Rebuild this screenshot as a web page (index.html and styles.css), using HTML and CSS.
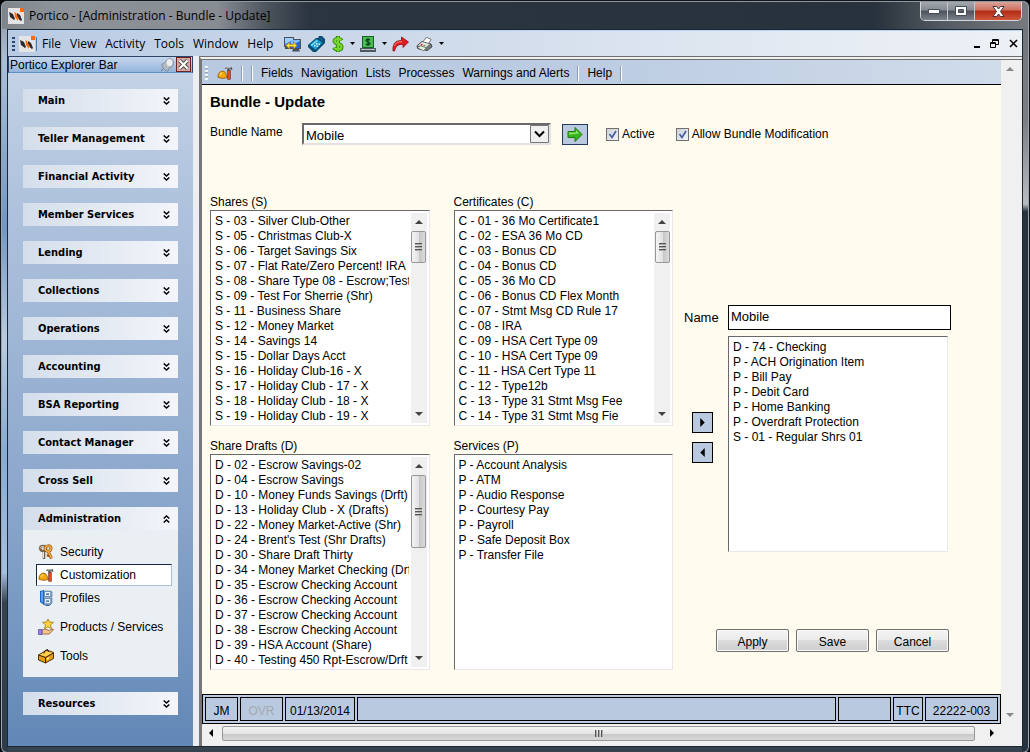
FILE: index.html
```html
<!doctype html>
<html lang="en">
<head>
    <meta charset="UTF-8">
    <meta name="viewport" content="width=device-width, initial-scale=1.0">
    <title>Portico - [Administration - Bundle - Update]</title>
    <link rel="stylesheet" href="styles.css">
</head>
<body>
    <!-- shared symbols -->
    <svg class="defs" aria-hidden="true">
        <symbol id="logo" viewBox="0 0 16 16">
            <path fill="#e4e4e6" d="M0 0h16v16H0z"/>
            <path fill="#ff6a10" d="M12 0h4v4h-4z"/>
            <path fill="#2b2b2d" d="M1 4l4 2 2 5-1 1-4-3zM9 5l3 2 2 5-1 1-4-3z"/>
            <path fill="#ff6a10" d="M6 4l2 1 3 6-1 2-3-4z"/>
            <path fill="#fff" d="M5 4l1 0 1 5zM10 13l1 0 0-3z"/>
        </symbol>
        <symbol id="down" viewBox="0 0 7 8">
            <path fill="none" stroke="#000" stroke-width="1.5" d="M.7.5L3.5 3 6.3.5M.7 4.5L3.5 7l2.8-2.5"/>
        </symbol>
        <symbol id="up" viewBox="0 0 7 8">
            <path fill="none" stroke="#000" stroke-width="1.5" d="M.7 3.5L3.5 1l2.8 2.5M.7 7.5L3.5 5l2.8 2.5"/>
        </symbol>
        <symbol id="hammer" viewBox="0 0 17 16">
            <path fill="#f7a80d" stroke="#8a4a00" stroke-width=".8" d="M1 12.500C1 8 3.500 6 6 6c2 0 3.500 2 4 4.500l1 2c-3 1.500-6 1.500-10 0z"/>
            <path fill="#ffe27a" d="M3 9.500C3.500 8 5 7 6 7.200L4 10.500z"/>
            <path fill="#6e1500" d="M11 5h3.500v10H11z"/>
            <path fill="#f0501e" d="M11.800 6h2v8.500h-2z"/>
            <path fill="#555" d="M8 3.500L10 1.500h5.500l1 3h-1.800l-.8-1-1 2h-2v-2z"/>
            <path fill="#ddd" d="M10.500 2h4v1h-5z"/>
        </symbol>
        <symbol id="drop" viewBox="0 0 5 3"><path d="M0 0h5L2.500 3z"/></symbol>
        <symbol id="tri-up" viewBox="0 0 8 4"><path fill="#444" d="M0 4L4 0l4 4z"/></symbol>
        <symbol id="tri-down" viewBox="0 0 8 4"><path fill="#444" d="M0 0h8L4 4z"/></symbol>
        <symbol id="tri-left" viewBox="0 0 4 8"><path d="M4 0v8L0 4z"/></symbol>
        <symbol id="tri-right" viewBox="0 0 4 8"><path d="M0 0l4 4-4 4z"/></symbol>
    </svg>

    <div class="window">
        <header class="title-bar">
            <svg class="icon"><use href="#logo"/></svg>
            <span class="title">Portico - [Administration - Bundle - Update]</span>
            <div class="window-buttons">
                <button aria-label="Minimize"><svg width="12" height="5" viewBox="0 0 12 5"><path fill="#fff" stroke="#444c58" d="M.5.5h11v4H.5z"/></svg></button>
                <button aria-label="Maximize"><svg width="12" height="10" viewBox="0 0 12 10"><path fill="#fff" stroke="#444c58" fill-rule="evenodd" d="M.5.500h11v9H.5zM3.500 3.500h5v3h-5z"/></svg></button>
                <button class="close" aria-label="Close"><svg width="13" height="11" viewBox="0 0 13 11"><path fill="#fff" stroke="#4d3238" d="M1 .5h3.500l2 2.500 2-2.500H12L8.500 5.500l3.500 5H8.500l-2-2.500-2 2.500H1l3.500-5z"/></svg></button>
            </div>
        </header>

        <div class="client">
            <nav class="menu-bar">
                <span class="grip"></span>
                <svg class="icon"><use href="#logo"/></svg>
                <span class="line"></span>
                <button>File</button>
                <button>View</button>
                <button>Activity</button>
                <button>Tools</button>
                <button>Window</button>
                <button>Help</button>
                <div class="tools">
                    <button aria-label="Connect">
                        <svg width="17" height="16" viewBox="0 0 17 16">
                            <path fill="#46505f" d="M0 1h10v10H0zM6 3h11v10H6zM9 13h6l1 2.500H8zM1 11h4v2H1z"/>
                            <path fill="#3e7bea" d="M1 2h8v8H1z"/>
                            <path fill="#9bd0ff" d="M1 2h8v2L1 8z"/>
                            <path fill="#2862dc" d="M7 4h9v8H7z"/>
                            <path fill="#7dbafc" d="M7 4h9v1L7 10z"/>
                            <path fill="#ffe02c" stroke="#9a7000" stroke-width=".6" d="M2 9.500L5.500 6v2.300h4V6L13 9.500 9.500 13v-2.300h-4V13z"/>
                        </svg>
                    </button>
                    <button aria-label="Calculator">
                        <svg width="17" height="16" viewBox="0 0 17 16">
                            <path fill="#0a4c70" d="M0 9L8 2l2 0 1-2 3 0 3 3 0 4-9 9-3 0-5-5z"/>
                            <path fill="#1698cc" d="M1.500 9L8.500 3l6 3.500-7 7.500z"/>
                            <path fill="#6fd4f5" d="M2.500 9l6-5 1.500 1-6 5z"/>
                            <path fill="#0c5c86" d="M11 2l2-1 2.500 2.500-1.500 2z"/>
                            <path fill="#e8fbff" d="M6 9h1.500v1.500H6zM8 7h1.500v1.500H8zM8.500 9.500H10V11H8.500zM10.500 7.500H12V9h-1.500z"/>
                        </svg>
                    </button>
                    <button aria-label="Cash" class="with-drop">
                        <svg width="12" height="16" viewBox="0 0 12 16">
                            <path fill="none" stroke="#2c7a0a" stroke-width="4" d="M9.500 4.500C8.500 2.500 3 2 2.500 5c0 3 7 2.500 7 6 0 3.500-6 3-7.500.5M6 0v16"/>
                            <path fill="none" stroke="#78d82a" stroke-width="2.400" d="M9.500 4.500C8.500 2.500 3 2 2.500 5c0 3 7 2.500 7 6 0 3.500-6 3-7.500.5M6 .5v15"/>
                        </svg>
                        <svg class="drop"><use href="#drop"/></svg>
                    </button>
                    <button aria-label="Teller" class="with-drop">
                        <svg width="16" height="16" viewBox="0 0 16 16">
                            <path fill="#13632a" d="M2 0h12v12H2z"/>
                            <path fill="#49ba54" d="M3 1h10v10H3z"/>
                            <path fill="none" stroke="#073d14" stroke-width="1.200" d="M10 4C9 3 6 3 6 4.500S10 6 10 7.500 7 9 6 8M8 2v8"/>
                            <path fill="#50565e" d="M0 12h16v4H0z"/>
                            <path fill="#b9c0c8" d="M1 13h14v1H1z"/>
                        </svg>
                        <svg class="drop"><use href="#drop"/></svg>
                    </button>
                    <button aria-label="Forward">
                        <svg width="17" height="16" viewBox="0 0 17 16">
                            <path fill="#e21d20" stroke="#8c0c10" stroke-width=".8" d="M1 15C.500 8 3 4.500 9.500 4.500V1l7 5-5.500 5.500V8.500C6 8 4 10 2.500 15z"/>
                            <path fill="none" stroke="#ff8a80" d="M2 10c1.500-3 4-4.500 8-4.300"/>
                        </svg>
                    </button>
                    <button aria-label="Print" class="with-drop">
                        <svg width="17" height="16" viewBox="0 0 18 16">
                            <path fill="#fff" stroke="#555" stroke-width=".8" d="M7 6l4-5 5 2-3 5z"/>
                            <path fill="#74787c" stroke="#333" stroke-width=".8" d="M1 10l5-4.500 10 2.500 1 3-5 4-10-2z"/>
                            <path fill="#dfe1e2" d="M2 9.500L6.500 6l8 2-4 3.500z"/>
                            <path fill="#e8f3dc" stroke="#444" stroke-width=".6" d="M1 12l4-2 6 2-3 3z"/>
                            <path fill="#d61e1e" d="M5 8h2v1.500H5z"/>
                            <path fill="#38a820" d="M8 9h2v1H8z"/>
                        </svg>
                        <svg class="drop"><use href="#drop"/></svg>
                    </button>
                </div>
                <div class="child-buttons">
                    <button aria-label="Minimize child"><svg width="6" height="9" viewBox="0 0 6 9"><path d="M0 7h6v2H0z"/></svg></button>
                    <button aria-label="Restore child"><svg width="9" height="9" viewBox="0 0 9 9"><path fill="none" stroke="#000" d="M2.500 3V.5h6v5H6M3 1.500h5M.5 3.500h5v5h-5zM1 4.500h4"/></svg></button>
                    <button aria-label="Close child"><svg width="9" height="9" viewBox="0 0 9 9"><path fill="none" stroke="#000" stroke-width="1.600" d="M1 1l7 7M8 1L1 8"/></svg></button>
                </div>
            </nav>

            <div class="workspace">
                <aside class="sidebar">
                    <div class="sidebar-title">
                        <span>Portico Explorer Bar</span>
                        <svg width="14" height="14" viewBox="0 0 14 14">
                            <path stroke="#777" d="M1 13l4-4"/>
                            <path fill="#b4bac2" stroke="#747b84" stroke-width=".7" d="M2 6c2-1 3-1 4-3C8 0 12 0 13 3s0 6-3 7c-1 0-1 1-2 3-3 0-6-3-6-7z"/>
                            <ellipse cx="9.500" cy="4.500" rx="3" ry="3.500" fill="#eceef0"/>
                        </svg>
                        <button aria-label="Close explorer bar"><svg width="11" height="11" viewBox="0 0 11 11"><path stroke="#444" stroke-width="4" d="M1.500 1.500l8 8M9.500 1.500l-8 8"/><path stroke="#fff" stroke-width="2.200" d="M1.500 1.500l8 8M9.500 1.500l-8 8"/></svg></button>
                    </div>
                    <div class="groups">
                        <button class="group">Main <svg><use href="#down"/></svg></button>
                        <button class="group">Teller Management <svg><use href="#down"/></svg></button>
                        <button class="group">Financial Activity <svg><use href="#down"/></svg></button>
                        <button class="group">Member Services <svg><use href="#down"/></svg></button>
                        <button class="group">Lending <svg><use href="#down"/></svg></button>
                        <button class="group">Collections <svg><use href="#down"/></svg></button>
                        <button class="group">Operations <svg><use href="#down"/></svg></button>
                        <button class="group">Accounting <svg><use href="#down"/></svg></button>
                        <button class="group">BSA Reporting <svg><use href="#down"/></svg></button>
                        <button class="group">Contact Manager <svg><use href="#down"/></svg></button>
                        <button class="group">Cross Sell <svg><use href="#down"/></svg></button>
                        <div class="open-group">
                            <button class="group">Administration <svg><use href="#up"/></svg></button>
                            <div class="items">
                                <a href="#security">
                                    <svg class="icon" viewBox="0 0 16 16">
                                        <path fill="none" stroke="#76634e" stroke-width="2.500" d="M2 4.500C2 1 8 1 8 4.500S3 8 2 4.500zM6 7v8"/>
                                        <path fill="none" stroke="#e8dfd0" d="M2 4.500C2 2 7 1.500 7.500 4.500M5.500 8v6"/>
                                        <path fill="none" stroke="#a55e13" stroke-width="3" d="M7 5c0-4 6-4 6-1s-4 5-6 1zM10 7l3.500 7.500M11 11l-2 1"/>
                                        <path fill="none" stroke="#f6b34c" stroke-width="1.400" d="M7 5c0-4 6-4 6-1s-4 5-6 1zM10.500 8l3 6"/>
                                    </svg>
                                    Security
                                </a>
                                <a href="#customization" class="selected">
                                    <svg class="icon"><use href="#hammer"/></svg>
                                    Customization
                                </a>
                                <a href="#profiles">
                                    <svg class="icon" viewBox="0 0 16 16">
                                        <path fill="#1a66c4" d="M2 1l4-1v15l-4-3zM6 13h8l-3 3H8z"/>
                                        <path fill="#58a4f2" d="M3 2l2-1v12l-2-2z"/>
                                        <path fill="#87a6c8" stroke="#4a6b94" stroke-width=".6" d="M6 1h7l1 1v5H6zM6 8h8v5l-2 2H6z"/>
                                        <path fill="#e5eff8" d="M7 2h5v4H7zM7 9h5v4H7z"/>
                                        <path fill="#2c5c98" d="M8 3.500h3v1.200H8zM8 10.500h3v1.200H8z"/>
                                    </svg>
                                    Profiles
                                </a>
                                <a href="#products" class="spaced">
                                    <svg class="icon" viewBox="0 0 16 16">
                                        <path fill="#f8d33c" stroke="#a87a0c" stroke-width=".8" d="M10 0l1.500 3 4 .3-3 2.500 1 4-3.500-2-3.500 2 1-4-3-2.500 4-.3z"/>
                                        <path fill="#f4c68c" stroke="#8e5a28" stroke-width=".8" d="M4 11l3-1 4 1.500 4-1.500.5 1L11 15H4z"/>
                                        <path fill="#9484e4" stroke="#5a4ab0" stroke-width=".8" d="M.5 10.500H4v5H.5z"/>
                                    </svg>
                                    Products / Services
                                </a>
                                <a href="#tools" class="spaced">
                                    <svg class="icon" viewBox="0 0 16 16">
                                        <path fill="#e89a10" stroke="#3c2400" stroke-width=".9" d="M.5 7L9 2l6.500 2.500v6L7.500 15 .5 12z"/>
                                        <path fill="#ffd04a" d="M1.500 7L9 3l5.500 2L7.500 8.500z"/>
                                        <path fill="none" stroke="#3c2400" d="M.5 7l7 2.500 8-4.500M7.500 9.500V15M6 5.500L6.500 3l3-1.500 1 2.500"/>
                                        <path fill="#fff3b0" d="M9 10l2-1v2l-2 1z"/>
                                    </svg>
                                    Tools
                                </a>
                            </div>
                        </div>
                        <button class="group">Resources <svg><use href="#down"/></svg></button>
                    </div>
                </aside>

                <div class="mdi">
                    <div class="page">
                        <nav class="page-menu">
                            <span class="grip light"></span>
                            <button aria-label="Customize"><svg class="icon"><use href="#hammer"/></svg></button>
                            <span class="sep"></span>
                            <span class="sep"></span>
                            <button>Fields</button>
                            <button>Navigation</button>
                            <button>Lists</button>
                            <button>Processes</button>
                            <button>Warnings and Alerts</button>
                            <span class="sep"></span>
                            <button>Help</button>
                            <span class="sep"></span>
                        </nav>

                        <main>
                            <h1>Bundle - Update</h1>
                            <div class="bundle-row">
                                <label class="bundle-label" for="bundle">Bundle Name</label>
                                <select id="bundle" class="combo"><option>Mobile</option></select>
                                <button class="go" aria-label="Go">
                                    <svg width="16" height="15" viewBox="0 0 16 15">
                                        <path fill="#35b71c" stroke="#24760f" d="M1 4.500h7v-4L15 7.500l-7 7v-4H1z"/>
                                        <path fill="#92e66c" d="M2 5.500h7V3l3 3.500-10 1z"/>
                                    </svg>
                                </button>
                                <label class="check active"><input type="checkbox" checked> Active</label>
                                <label class="check"><input type="checkbox" checked> Allow Bundle Modification</label>
                            </div>

                            <div class="editor">
                                <div class="lists">
                                    <div class="field">
                                        <label for="shares">Shares (S)</label>
                                        <div class="listbox">
                                            <select id="shares" multiple>
                                                <option>S - 03 - Silver Club-Other</option>
                                                <option>S - 05 - Christmas Club-X</option>
                                                <option>S - 06 - Target Savings Six</option>
                                                <option>S - 07 - Flat Rate/Zero Percent! IRA</option>
                                                <option>S - 08 - Share Type 08 - Escrow;Test</option>
                                                <option>S - 09 - Test For Sherrie (Shr)</option>
                                                <option>S - 11 - Business Share</option>
                                                <option>S - 12 - Money Market</option>
                                                <option>S - 14 - Savings 14</option>
                                                <option>S - 15 - Dollar Days Acct</option>
                                                <option>S - 16 - Holiday Club-16 - X</option>
                                                <option>S - 17 - Holiday Club - 17 - X</option>
                                                <option>S - 18 - Holiday Club - 18 - X</option>
                                                <option>S - 19 - Holiday Club - 19 - X</option>
                                            </select>
                                            <div class="scroll">
                                                <svg class="tri"><use href="#tri-up"/></svg>
                                                <span class="thumb"><i></i></span>
                                                <svg class="tri"><use href="#tri-down"/></svg>
                                            </div>
                                        </div>
                                    </div>
                                    <div class="field">
                                        <label for="certs">Certificates (C)</label>
                                        <div class="listbox">
                                            <select id="certs" multiple>
                                                <option>C - 01 - 36 Mo Certificate1</option>
                                                <option>C - 02 - ESA 36 Mo CD</option>
                                                <option>C - 03 - Bonus CD</option>
                                                <option>C - 04 - Bonus CD</option>
                                                <option>C - 05 - 36 Mo CD</option>
                                                <option>C - 06 - Bonus CD Flex Month</option>
                                                <option>C - 07 - Stmt Msg CD Rule 17</option>
                                                <option>C - 08 - IRA</option>
                                                <option>C - 09 - HSA Cert Type 09</option>
                                                <option>C - 10 - HSA Cert Type 09</option>
                                                <option>C - 11 - HSA Cert Type 11</option>
                                                <option>C - 12 - Type12b</option>
                                                <option>C - 13 - Type 31 Stmt Msg Fee</option>
                                                <option>C - 14 - Type 31 Stmt Msg Fie</option>
                                            </select>
                                            <div class="scroll">
                                                <svg class="tri"><use href="#tri-up"/></svg>
                                                <span class="thumb"><i></i></span>
                                                <svg class="tri"><use href="#tri-down"/></svg>
                                            </div>
                                        </div>
                                    </div>
                                    <div class="field">
                                        <label for="drafts">Share Drafts (D)</label>
                                        <div class="listbox">
                                            <select id="drafts" multiple>
                                                <option>D - 02 - Escrow Savings-02</option>
                                                <option>D - 04 - Escrow Savings</option>
                                                <option>D - 10 - Money Funds Savings (Drft)</option>
                                                <option>D - 13 - Holiday Club - X (Drafts)</option>
                                                <option>D - 22 - Money Market-Active (Shr)</option>
                                                <option>D - 24 - Brent's Test (Shr Drafts)</option>
                                                <option>D - 30 - Share Draft Thirty</option>
                                                <option>D - 34 - Money Market Checking (Drft)</option>
                                                <option>D - 35 - Escrow Checking Account</option>
                                                <option>D - 36 - Escrow Checking Account</option>
                                                <option>D - 37 - Escrow Checking Account</option>
                                                <option>D - 38 - Escrow Checking Account</option>
                                                <option>D - 39 - HSA Account (Share)</option>
                                                <option>D - 40 - Testing 450 Rpt-Escrow/Drft</option>
                                            </select>
                                            <div class="scroll">
                                                <svg class="tri"><use href="#tri-up"/></svg>
                                                <span class="thumb long"><i></i></span>
                                                <svg class="tri"><use href="#tri-down"/></svg>
                                            </div>
                                        </div>
                                    </div>
                                    <div class="field">
                                        <label for="services">Services (P)</label>
                                        <div class="listbox">
                                            <select id="services" multiple>
                                                <option>P - Account Analysis</option>
                                                <option>P - ATM</option>
                                                <option>P - Audio Response</option>
                                                <option>P - Courtesy Pay</option>
                                                <option>P - Payroll</option>
                                                <option>P - Safe Deposit Box</option>
                                                <option>P - Transfer File</option>
                                            </select>
                                        </div>
                                    </div>
                                </div>

                                <div class="chosen">
                                    <div class="name-row">
                                        <label for="name">Name</label>
                                        <input id="name" type="text" value="Mobile">
                                    </div>
                                    <div class="chosen-row">
                                        <div class="movers">
                                            <button aria-label="Add"><svg><use href="#tri-right"/></svg></button>
                                            <button aria-label="Remove"><svg><use href="#tri-left"/></svg></button>
                                        </div>
                                        <div class="listbox">
                                            <select multiple aria-label="Bundle items">
                                                <option>D - 74 - Checking</option>
                                                <option>P - ACH Origination Item</option>
                                                <option>P - Bill Pay</option>
                                                <option>P - Debit Card</option>
                                                <option>P - Home Banking</option>
                                                <option>P - Overdraft Protection</option>
                                                <option>S - 01 - Regular Shrs 01</option>
                                            </select>
                                        </div>
                                    </div>
                                    <div class="actions">
                                        <button>Apply</button>
                                        <button>Save</button>
                                        <button>Cancel</button>
                                    </div>
                                </div>
                            </div>
                        </main>

                        <footer class="status">
                            <span class="user">JM</span>
                            <span class="ovr">OVR</span>
                            <span class="date">01/13/2014</span>
                            <span class="message"></span>
                            <span class="blank"></span>
                            <span class="code">TTC</span>
                            <span class="account">22222-003</span>
                        </footer>
                    </div>
                    <div class="v-scroll">
                        <svg class="tri"><use href="#tri-up"/></svg>
                        <svg class="tri"><use href="#tri-down"/></svg>
                    </div>
                    <div class="h-scroll">
                        <svg class="side"><use href="#tri-left"/></svg>
                        <span class="bar"><i></i></span>
                        <svg class="side"><use href="#tri-right"/></svg>
                    </div>
                </div>
            </div>
        </div>
    </div>
</body>
</html>
```

FILE: styles.css
```css
* {
    box-sizing: border-box;
}

body {
    margin: 0;
    background-color: #000;
    font-family: "Liberation Sans", Arial, sans-serif;
    font-size: 12px;
    color: #000;
}

button,
input,
select {
    font: inherit;
    color: inherit;
    margin: 0;
}

button {
    display: flex;
    align-items: center;
    border: none;
    padding: 0;
    background: none;
    white-space: nowrap;
}

svg {
    display: block;
    flex: none;
}

.defs {
    position: absolute;
    width: 0;
    height: 0;
}

.icon {
    width: 16px;
    height: 16px;
}

/* window frame */
.window {
    display: flex;
    flex-direction: column;
    min-height: 100vh;
    padding: 0 6px 6px;
    border: 1px solid #10161c;
    border-radius: 7px;
    box-shadow: inset 0 0 0 1px #9aa5b1;
    background:
        linear-gradient(#6f7379, #7b7f84 16%, #b9bdc2 27%, #26333e 28%, #26333e) right / 7px 100% no-repeat,
        linear-gradient(#8a929b, #a9bfd8 8%, #7397c2 30%, #b9cbe0 45%, #86abd4 60%, #a5bfdf 76%, #37424d 80%, #2f3c48) left / 7px 100% no-repeat,
        #36434f;
}

.title-bar {
    display: flex;
    align-items: center;
    gap: 5px;
    height: 28px;
    margin: 0 -5px;
    padding: 0 6px;
    border-top: 1px solid #8f979f;
    border-radius: 6px 6px 0 0;
    background: linear-gradient(90deg, #80858c, #8e9299 5%, #888c93 21%, #4a525c 26%, #2b353f 30%, #28323c 85%, #555b62 92%, #777b80);
    font-family: "Open Sans", "Noto Sans", sans-serif;
}

.window-buttons {
    display: flex;
    align-self: flex-start;
    height: 19px;
    margin-left: auto;
    border: 1px solid #d5d7da;
    border-top: none;
    border-radius: 0 0 5px 5px;
    overflow: hidden;
}

.window-buttons button {
    justify-content: center;
    width: 27px;
    border-right: 1px solid #c5c8cc;
    background: linear-gradient(#a4a8ae, #858a92 45%, #4c525b 50%, #7c828b);
}

.window-buttons .close {
    width: 46px;
    border-right: none;
    background: linear-gradient(#dba498, #cc6f5d 45%, #b22a14 50%, #d1553a);
}

.client {
    display: flex;
    flex-direction: column;
    flex: 1;
    border: 1px solid #1b2733;
    background-color: #eceef3;
}

/* main menu */
.menu-bar {
    display: flex;
    align-items: center;
    height: 26px;
    padding: 0 4px;
    border-top: 1px solid #b6d3f4;
    background: linear-gradient(90deg, #b9cbe3, #cbd8e9 35%, #e8edf4 85%, #edf1f6);
    font-family: "Open Sans", "Noto Sans", sans-serif;
}

.grip {
    width: 3px;
    height: 14px;
    margin-right: 4px;
    background: repeating-linear-gradient(#2a4677 0 2px, transparent 2px 4px);
}

.grip.light {
    margin-right: 9px;
    background: repeating-linear-gradient(#f2f4f8 0 2px, #98a6ba 2px 3px, transparent 3px 4px);
}

.line {
    width: 1px;
    height: 14px;
    margin: 0 5px 0 1px;
    background-color: #4b79b8;
}

.menu-bar > button {
    margin-right: 9px;
}

.tools {
    display: flex;
    align-items: center;
    gap: 7px;
    margin-left: 2px;
}

.tools button {
    gap: 6px;
}

.tools .with-drop {
    margin-right: -2px;
}

.drop {
    width: 5px;
    height: 3px;
}

.child-buttons {
    display: flex;
    gap: 10px;
    margin-left: auto;
}

.workspace {
    display: flex;
    flex: 1;
}

/* explorer bar */
.sidebar {
    display: flex;
    flex-direction: column;
    flex: none;
    width: 185px;
    background: linear-gradient(#c6d4e5, #b2c5df 18%, #8aa6cb 65%, #6288b7);
}

.sidebar-title {
    display: flex;
    align-items: center;
    gap: 2px;
    height: 17px;
    padding: 0 1px;
    border: 1px solid #2c4566;
    border-bottom-color: #5f8dc6;
    background: linear-gradient(#c6d8ed, #93b4dc);
}

.sidebar-title span {
    flex: 1;
}

.sidebar-title button {
    justify-content: center;
    width: 15px;
    height: 15px;
    border: 1px solid #6b2020;
    background-color: #dba9a5;
}

.groups {
    display: flex;
    flex-direction: column;
    gap: 15px;
    padding: 16px 15px;
}

.group {
    justify-content: space-between;
    width: 100%;
    height: 23px;
    padding: 0 8px 0 15px;
    background: linear-gradient(90deg, #d4deeb, #f3f5fa);
    font-family: "DejaVu Sans Condensed", "DejaVu Sans", sans-serif;
    font-size: 11px;
    font-weight: bold;
}

.group svg {
    width: 7px;
    height: 8px;
}

.items {
    display: flex;
    flex-direction: column;
    gap: 1px;
    height: 147px;
    padding: 11px 6px 0 13px;
    background-color: #e9eff3;
}

.items a {
    display: flex;
    align-items: center;
    gap: 6px;
    height: 22px;
    padding-left: 1px;
    border: 1px solid transparent;
    color: #000;
    text-decoration: none;
    white-space: nowrap;
}

.items .selected {
    border-color: #17233f #a9bfe0 #a9bfe0 #17233f;
    background-color: #fff;
}

.items .spaced {
    margin-top: 6px;
}

/* child window */
.mdi {
    display: grid;
    grid-template-columns: minmax(0, 1fr) 17px;
    grid-template-rows: 1fr 18px;
    flex: 1;
    min-width: 0;
    margin-left: 6px;
    padding: 0 4px 4px 0;
    border-top: 4px double #6e6e6e;
    border-left: 3px solid #777;
    background-color: #f0f0f0;
}

.page {
    display: flex;
    flex-direction: column;
    background-color: #fffbef;
}

.page-menu {
    display: flex;
    align-items: center;
    height: 25px;
    padding: 2px 0 0 3px;
    border-bottom: 1px solid #000;
    background: linear-gradient(90deg, #b8c9e0, #bccce2 50%, #d0dcea);
}

.page-menu button {
    margin-right: 8px;
}

.sep {
    width: 2px;
    height: 15px;
    margin-right: 8px;
    border-left: 1px solid #8f9db2;
    border-right: 1px solid #fff;
}

main {
    flex: 1;
    padding: 7px 50px 24px 8px;
}

h1 {
    margin: 0 0 11px;
    font-size: 15px;
    line-height: 20px;
}

.bundle-row {
    display: flex;
    align-items: center;
    height: 22px;
    margin-bottom: 50px;
}

.bundle-label {
    align-self: flex-start;
    width: 92px;
    line-height: 18px;
}

.combo {
    appearance: none;
    width: 249px;
    height: 22px;
    padding: 2px 20px 0 2px;
    border: 2px solid #696969;
    border-right-color: #e3e3e3;
    border-bottom-color: #e3e3e3;
    border-radius: 0;
    background: #fff url('data:image/svg+xml,<svg xmlns="http://www.w3.org/2000/svg" width="19" height="18"><path d="M.5.5h18v17H.5z" fill="%23f0f0f0" stroke="%23777"/><path d="M5 6.500l4.500 4.500L14 6.500" fill="none" stroke="%23000" stroke-width="2"/></svg>') right center no-repeat;
    font-size: 13px;
}

.go {
    justify-content: center;
    width: 26px;
    height: 21px;
    margin: 0 18px 0 11px;
    border: 1px solid #23395d;
    background-color: #b8c9e0;
}

.check {
    display: flex;
    align-items: center;
    gap: 3px;
    white-space: nowrap;
}

.check.active {
    margin-right: 21px;
}

.check input {
    appearance: none;
    width: 13px;
    height: 13px;
    border: 1px solid #707070;
    background: linear-gradient(135deg, #cdd2d8, #f2f3f5);
}

.check input:checked {
    background-image: url('data:image/svg+xml,<svg xmlns="http://www.w3.org/2000/svg" width="11" height="11"><path d="M2.500 5l2.500 3.500L9 2" fill="none" stroke="%234360a4" stroke-width="1.700"/></svg>'), linear-gradient(135deg, #cdd2d8, #f2f3f5);
}

.editor {
    display: flex;
    gap: 11px;
}

.lists {
    display: grid;
    grid-template-columns: repeat(2, minmax(0, 1fr));
    gap: 13px 24px;
    flex: 1;
}

.field label {
    display: block;
    line-height: 15px;
}

.listbox {
    display: flex;
    flex: 1;
    height: 216px;
    border: 1px solid #696969;
    border-right-color: #e8e8e8;
    border-bottom-color: #e8e8e8;
    background-color: #fff;
}

.listbox select {
    flex: 1;
    width: 0;
    min-width: 0;
    height: 214px;
    padding: 3px 0 0 2px;
    border: none;
    outline: none;
    background: none;
    scrollbar-width: none;
    overflow: hidden;
}

.listbox option {
    height: 15px;
    min-height: 15px;
    padding: 0 2px;
    line-height: 15px;
}

.scroll {
    display: flex;
    flex-direction: column;
    align-items: center;
    width: 16px;
    margin: 2px;
    padding: 7px 0;
    background-color: #f0f0f0;
}

.scroll .tri:last-child {
    margin-top: auto;
}

.tri {
    width: 8px;
    height: 4px;
}

.side {
    width: 4px;
    height: 8px;
}

.thumb {
    display: flex;
    align-items: center;
    justify-content: center;
    width: 15px;
    height: 32px;
    margin-top: 7px;
    border: 1px solid #979797;
    border-radius: 2px;
    background: linear-gradient(90deg, #f4f4f4, #e2e2e2 50%, #c6c6c8 55%, #dcdcde);
}

.thumb.long {
    height: 73px;
}

.thumb i {
    width: 7px;
    height: 8px;
    background: repeating-linear-gradient(#555 0 1px, #aaa 1px 2px, transparent 2px 3px);
}

.chosen {
    width: 267px;
    padding-top: 110px;
}

.name-row {
    display: flex;
    align-items: center;
    margin-bottom: 6px;
    font-size: 13px;
}

.name-row label {
    width: 44px;
}

.name-row input {
    flex: 1;
    min-width: 0;
    height: 25px;
    padding: 0 2px 2px;
    border: 1px solid #000;
    border-radius: 0;
    background-color: #fff;
}

.chosen-row {
    display: flex;
    padding-right: 3px;
}

.movers {
    display: flex;
    flex-direction: column;
    justify-content: center;
    gap: 9px;
    width: 44px;
    padding: 0 8px 13px;
}

.movers button {
    justify-content: center;
    width: 21px;
    height: 21px;
    border: 1px solid #000;
    background-color: #b8c9e0;
}

.movers svg {
    width: 5px;
    height: 9px;
}

.actions {
    display: flex;
    justify-content: flex-end;
    gap: 7px;
    margin-top: 77px;
    padding-right: 2px;
}

.actions button {
    justify-content: center;
    width: 73px;
    height: 23px;
    padding-top: 2px;
    border: 1px solid #707070;
    border-radius: 2px;
    background: linear-gradient(#f3f3f3, #ebebeb 49%, #dcdcdc 50%, #cdcdcd);
    box-shadow: inset 0 0 0 1px #fafafa;
}

.status {
    display: flex;
    gap: 2px;
    height: 30px;
    padding: 2px;
    border: 1px solid #000;
    background-color: #b8c9e0;
}

.status span {
    display: flex;
    align-items: center;
    justify-content: center;
    padding-top: 3px;
    border: 1px solid #000;
}

.status .user {
    width: 33px;
}

.status .ovr {
    width: 43px;
    color: #a5a9ae;
}

.status .date {
    width: 70px;
}

.status .message {
    flex: 1;
}

.status .blank {
    width: 53px;
}

.status .code {
    width: 30px;
}

.status .account {
    width: 73px;
}

.v-scroll {
    display: flex;
    flex-direction: column;
    align-items: center;
    justify-content: space-between;
    padding: 7px 0;
    opacity: 0.6;
}

.h-scroll {
    display: flex;
    align-items: center;
    gap: 9px;
    padding: 1px 7px;
}

.bar {
    display: flex;
    align-items: center;
    justify-content: center;
    flex: 1;
    height: 15px;
    margin-right: 6px;
    border: 1px solid #979797;
    border-radius: 2px;
    background: linear-gradient(#f4f4f4, #e4e4e4 50%, #c8c8ca 55%, #d8d8da);
}

.bar i {
    width: 8px;
    height: 7px;
    background: repeating-linear-gradient(90deg, #555 0 1px, #aaa 1px 2px, transparent 2px 3px);
}
```
